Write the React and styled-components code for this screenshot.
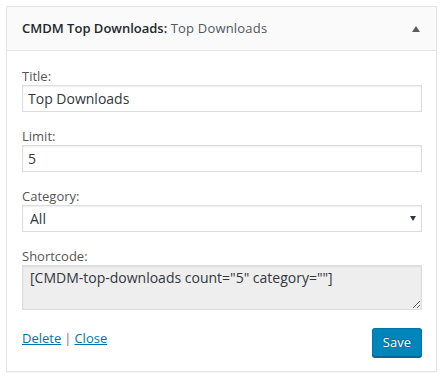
import * as React from "react"
import styled, { createGlobalStyle } from "styled-components"

const GlobalStyle = createGlobalStyle`
  body {
    margin: 0;
    background: #fff;
    font-family: "Open Sans", "Noto Sans", sans-serif;
    font-size: 13px;
    color: #444;
  }
`

const Page = styled.div`
  padding: 6px;
`

const Widget = styled.div`
  width: 431px;
  box-sizing: border-box;
  border: 1px solid #e5e5e5;
  background: #fff;
  box-shadow: 0 1px 1px rgba(0,0,0,.04);
`

const Top = styled.div`
  height: 43px;
  display: flex;
  align-items: center;
  justify-content: space-between;
  padding: 0 16px 0 15px;
  background: #fafafa;
  border-bottom: 1px solid #e5e5e5;
`

const Heading = styled.h3`
  margin: 0;
  font-size: 13px;
  font-weight: 600;
  color: #23282d;
  line-height: 1;
`

const Sub = styled.span`
  font-weight: 400;
  color: #50575e;
  letter-spacing: 0.2px;
`

const Toggle = styled.span`
  width: 0;
  height: 0;
  border-left: 4px solid transparent;
  border-right: 4px solid transparent;
  border-bottom: 6px solid #555d66;
`

const Body = styled.div`
  padding: 16px 14px 14px 15px;
  display: flex;
  flex-direction: column;
  gap: 15px;
`

const Field = styled.div`
  display: flex;
  flex-direction: column;
`

const Label = styled.label`
  line-height: 18px;
  color: #555;
`

const inputBase = `
  box-sizing: border-box;
  width: 400px;
  margin: 0;
  border: 1px solid #ddd;
  box-shadow: inset 0 1px 2px rgba(0,0,0,.07);
  font-family: "Open Sans", "Noto Sans", sans-serif;
  font-size: 14px;
  color: #32373c;
  outline: none;
`

const Input = styled.input`
  ${inputBase}
  height: 27px;
  padding: 0 5px;
  background: #fff;
`

const SelectWrap = styled.div`
  position: relative;
  width: 400px;
  &::after {
    content: "";
    position: absolute;
    right: 6px;
    top: 11px;
    border-left: 3px solid transparent;
    border-right: 3px solid transparent;
    border-top: 5px solid #32373c;
    pointer-events: none;
  }
`

const Select = styled.select`
  ${inputBase}
  height: 27px;
  padding: 0 5px 0 7px;
  background: #fff;
  appearance: none;
  border-radius: 0;
`

const Shortcode = styled.textarea`
  ${inputBase}
  height: 45px;
  padding: 2px 7px;
  line-height: 19px;
  background: #eee;
  resize: vertical;
`

const Actions = styled.div`
  display: flex;
  justify-content: space-between;
  align-items: flex-start;
  margin-top: 3px;
`

const Links = styled.div`
  padding-top: 1px;
  line-height: 18px;
  color: #7c6f9a;
`

const Link = styled.a`
  color: #0073aa;
  text-decoration: underline;
  cursor: pointer;
`

const Sep = styled.span`
  margin: 0 3px;
`

const SaveButton = styled.button`
  height: 29px;
  padding: 0 10px 1px;
  border: 1px solid #0073aa;
  border-bottom-color: #006799;
  border-radius: 3px;
  background: #0085ba;
  box-shadow: 0 1px 0 #006799;
  color: #fff;
  font-family: "Open Sans", "Noto Sans", sans-serif;
  font-size: 13px;
  text-shadow: 0 -1px 1px #006799, 1px 0 1px #006799;
  cursor: pointer;
`

export default function App() {
  return (
    <Page>
      <GlobalStyle />
      <Widget>
        <Top>
          <Heading>CMDM Top Downloads: <Sub>Top Downloads</Sub></Heading>
          <Toggle />
        </Top>
        <Body>
          <Field>
            <Label>Title:</Label>
            <Input defaultValue="Top Downloads" />
          </Field>
          <Field>
            <Label>Limit:</Label>
            <Input defaultValue="5" />
          </Field>
          <Field>
            <Label>Category:</Label>
            <SelectWrap>
              <Select defaultValue="all">
                <option value="all">All</option>
              </Select>
            </SelectWrap>
          </Field>
          <Field>
            <Label>Shortcode:</Label>
            <Shortcode readOnly defaultValue={'[CMDM-top-downloads count="5" category=""]'} />
          </Field>
          <Actions>
            <Links>
              <Link>Delete</Link><Sep>|</Sep><Link>Close</Link>
            </Links>
            <SaveButton>Save</SaveButton>
          </Actions>
        </Body>
      </Widget>
    </Page>
  )
}
